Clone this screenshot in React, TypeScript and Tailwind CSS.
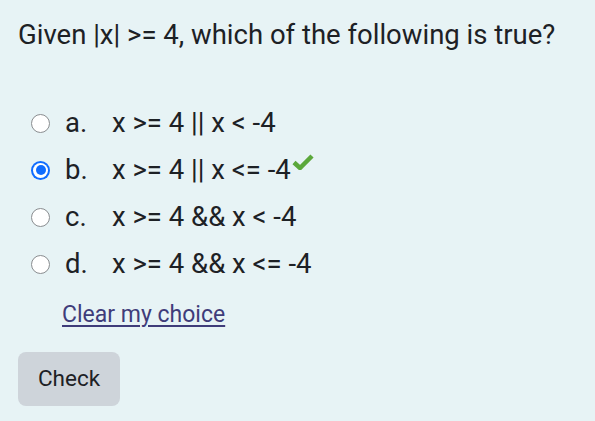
import React from 'react'

const options = [
  { letter: 'a.', text: 'x >= 4 || x < -4', checked: false, correct: false },
  { letter: 'b.', text: 'x >= 4 || x <= -4', checked: true, correct: true },
  { letter: 'c.', text: 'x >= 4 && x < -4', checked: false, correct: false },
  { letter: 'd.', text: 'x >= 4 && x <= -4', checked: false, correct: false },
]

const Radio: React.FC<{ checked: boolean }> = ({ checked }) =>
  checked ? (
    <span className="w-[19px] h-[19px] rounded-full bg-[#0f6cff] flex items-center justify-center shrink-0">
      <span className="w-[15px] h-[15px] rounded-full bg-white flex items-center justify-center">
        <span className="w-[10px] h-[10px] rounded-full bg-[#0f6cff]" />
      </span>
    </span>
  ) : (
    <span className="w-[19px] h-[19px] rounded-full border-[1.5px] border-[#8a8d90] bg-white shrink-0" />
  )

const Check: React.FC = () => (
  <svg width="22" height="16" viewBox="0 0 22 16" className="ml-[1px] -mt-[16px]">
    <path d="M2 8.5 L8 14 L20 2" fill="none" stroke="#5ba83b" strokeWidth="4.5" strokeLinejoin="miter" />
  </svg>
)

export default function App() {
  return (
    <div className="w-[595px] h-[421px] bg-[#e7f3f5] font-['Roboto',sans-serif] text-[#1d2125] overflow-hidden">
      <div className="pl-[18px] pt-[17px]">
        <p className="text-[27.5px] leading-[36px]">Given |x| &gt;= 4, which of the following is true?</p>

        <div className="mt-[53px] flex flex-col gap-[13px] pl-[13px] text-[27.5px]">
          {options.map((o) => (
            <div key={o.letter} className="flex items-center h-[34px]">
              <Radio checked={o.checked} />
              <span className="ml-[15px] w-[47px]">{o.letter}</span>
              <span>{o.text}</span>
              {o.correct && <Check />}
            </div>
          ))}
        </div>

        <a href="#" className="block mt-[17px] ml-[44px] text-[23px] text-[#3f3c7a] underline underline-offset-[3px] leading-[34px]">
          Clear my choice
        </a>

        <button className="mt-[20px] w-[102px] h-[54px] rounded-[8px] bg-[#ced4da] text-[#1d2125] text-[22.5px] flex items-center justify-center">
          Check
        </button>
      </div>
    </div>
  )
}
